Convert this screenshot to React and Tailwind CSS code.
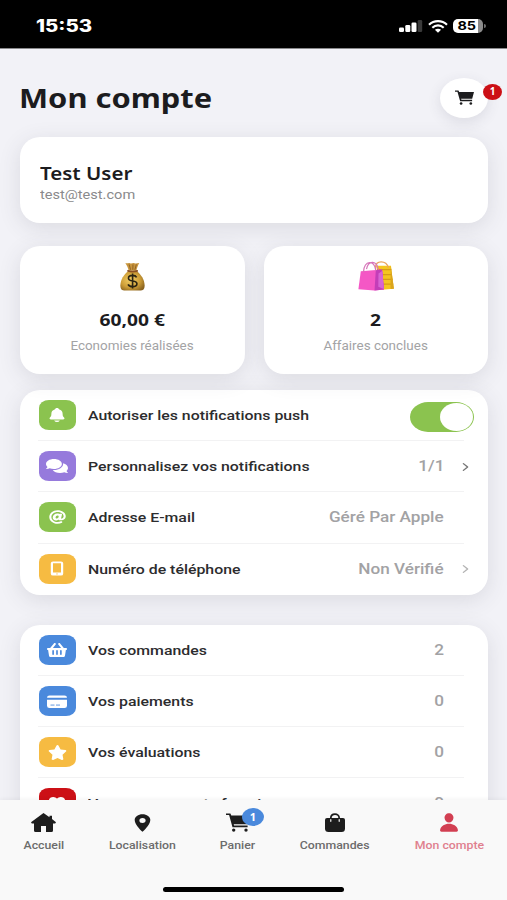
import React, { useState } from 'react'
import { IoNotifications, IoHeart, IoChevronForward, IoLocationSharp, IoPerson } from 'react-icons/io5'
import { FaComments, FaAt, FaShoppingBasket, FaStar } from 'react-icons/fa'

const CartIcon = ({ className }) => (
  <svg className={className} viewBox="0 0 24 20" preserveAspectRatio="none" fill="currentColor">
    <path d="M0 .6h4.400l.9 1.900H24l-2.300 9.300H7.700l.4 1.300H21.600v2H6.500L3.100 2.200H0Z" />
    <circle cx="7.700" cy="18" r="1.700" />
    <circle cx="20" cy="18" r="1.700" />
  </svg>
)

const HomeIcon = ({ className }) => (
  <svg className={className} viewBox="0 0 25 19" preserveAspectRatio="none" fill="currentColor">
    <path d="M12.500 0 18.500 4.200V2.800h2.500v3.200l4 3.300-.8 1.300H22V17.500q0 1.500-1.500 1.500H15v-6h-5v6H4.500Q3 19 3 17.500v-6.900H.8L0 9.300Z" />
  </svg>
)

const BagIcon = ({ className }) => (
  <svg className={className} viewBox="0 0 20 19" preserveAspectRatio="none">
    <path d="M2 5h16q2 0 2 2v8.500q0 3.500-3.500 3.500h-13Q0 19 0 15.500V7q0-2 2-2Z" fill="currentColor" />
    <path d="M5.800 6V5.200c0-5.400 8.400-5.400 8.400 0V6" stroke="currentColor" strokeWidth="1.700" fill="none" />
    <path d="M5.800 6.600v1.700M14.200 6.600v1.700" stroke="#f9f9f9" strokeWidth="1.200" strokeLinecap="round" />
  </svg>
)

const CardIcon = ({ className }) => (
  <svg className={className} viewBox="0 0 20 16" preserveAspectRatio="none">
    <path d="M2.500 1.500h15Q20 1.500 20 4H0q0-2.500 2.500-2.500ZM0 6h20v6.500q0 2.500-2.500 2.500h-15Q0 15 0 12.500Z" fill="currentColor" />
    <path d="M3.500 11.800h4M9 11.800h4" stroke="#4a89dc" strokeWidth=".9" />
  </svg>
)

const TabletIcon = ({ className }) => (
  <svg className={className} viewBox="0 0 20 16" preserveAspectRatio="none">
    <path fillRule="evenodd" d="M6 .5h8q2.200 0 2.200 2v11q0 2-2.200 2H6q-2.200 0-2.200-2v-11q0-2 2.200-2ZM6 2.500v9.700h8V2.500Z" fill="currentColor" />
    <circle cx="10" cy="13.800" r=".7" fill="#f6bb42" />
  </svg>
)

const settings = [
  { label: 'Autoriser les notifications push', icon: IoNotifications, color: 'bg-[#8bc34f]', toggle: true },
  { label: 'Personnalisez vos notifications', icon: FaComments, color: 'bg-[#967adc]', size: 'h-4 w-[22px]', value: '1/1', chevron: 'text-[#777]' },
  { label: 'Adresse E-mail', icon: FaAt, color: 'bg-[#8bc34f]', size: 'h-[14px] w-[17px]', value: 'Géré Par Apple' },
  { label: 'Numéro de téléphone', icon: TabletIcon, color: 'bg-[#f6bb42]', size: 'h-[15px] w-5', value: 'Non Vérifié', chevron: 'text-[#b4b4b4]' }
]

const activity = [
  { label: 'Vos commandes', icon: FaShoppingBasket, color: 'bg-[#4a89dc]', size: 'h-4 w-5', value: '2' },
  { label: 'Vos paiements', icon: CardIcon, color: 'bg-[#4a89dc]', size: 'h-[15px] w-5', value: '0' },
  { label: 'Vos évaluations', icon: FaStar, color: 'bg-[#f6bb42]', size: 'h-[15px] w-[19px]', value: '0' },
  { label: 'Vos commerçants favoris', icon: IoHeart, color: 'bg-[#cc1016]', value: '0' }
]

const tabs = [
  { label: 'Accueil', icon: HomeIcon, size: 'h-[19px] w-[25px]', width: 'w-[87px]' },
  { label: 'Localisation', icon: IoLocationSharp, size: 'h-5 w-[25px]', width: 'w-[110px]' },
  { label: 'Panier', icon: CartIcon, size: 'h-[19px] w-6', width: 'w-[82px]', badge: 1 },
  { label: 'Commandes', icon: BagIcon, size: 'h-[19px] w-5', width: 'w-[112px]' },
  { label: 'Mon compte', icon: IoPerson, size: 'h-[21px] w-[22px]', width: 'w-[116px]', active: true }
]

const StatusBar = () => (
  <div className="flex h-12 shrink-0 items-center justify-between bg-black pl-9 pr-[21px] pt-1 text-white">
    <span className="origin-left scale-x-[1.2] font-['Inter'] text-[17px] font-extrabold leading-none">15:53</span>
    <div className="flex items-center">
      <svg className="h-3 w-6" viewBox="0 0 24 12">
        <rect x="0" y="7.500" width="5" height="4.500" rx="1.300" fill="#fff" />
        <rect x="6.300" y="5" width="5" height="7" rx="1.300" fill="#fff" />
        <rect x="12.500" y="2.500" width="5" height="9.500" rx="1.300" fill="#fff" />
        <rect x="18.700" y="0" width="4.500" height="12" rx="1.300" fill="#3a3a3a" />
      </svg>
      <svg className="ml-[5px] h-[13px] w-5" viewBox="0 0 20 13" fill="none" stroke="#fff" strokeWidth="2.200">
        <path d="M1 4.700C6-.1 14-.1 19 4.700" />
        <path d="M4.300 7.700c3.200-3 8.200-3 11.400 0" />
        <path d="M6.900 9.800c1.700-1.500 4.500-1.500 6.200 0L10 12.800Z" fill="#fff" stroke="none" />
      </svg>
      <div className="ml-[5px] flex h-[14px] w-[30px] items-center justify-center rounded-[5px] bg-[linear-gradient(90deg,#fff_85%,#8c8c8c_85%)] pr-0.5 text-black">
        <span className="scale-x-[1.2] font-['Inter'] text-[12px] font-bold leading-[14px]">85</span>
      </div>
      <div className="ml-px h-1 w-0.5 rounded-r-full bg-[#6e6e6e]" />
    </div>
  </div>
)

const MoneyBag = () => (
  <svg className="h-[29px] w-[25px]" viewBox="0 0 26 30" preserveAspectRatio="none">
    <defs>
      <radialGradient id="sack" cx=".42" cy=".45" r=".65">
        <stop offset="0" stopColor="#f2cf67" />
        <stop offset=".6" stopColor="#cf9f38" />
        <stop offset="1" stopColor="#8b6420" />
      </radialGradient>
    </defs>
    <path d="M8.500 9.500C4 13 .6 18 .4 24c-.1 4 1.600 5.600 5 5.600h15.200c3.400 0 5.100-1.600 5-5.600C25.400 18 22 13 17.500 9.500Z" fill="url(#sack)" />
    <path d="M5.500 1c2 .8 3.500-.6 5 .2 1.500.8 3-.8 4.500 0 1.700.9 3.500-.3 5-.2-1.300 2.500-2.500 5-3 8H9C8.500 6 7 3.300 5.500 1Z" fill="#c8953d" />
    <path d="M9.500 2.500 11 8M13.500 2.500 13.300 8M17 2.500 15.500 8" stroke="#8d6124" strokeWidth="1" fill="none" />
    <path d="M8.300 9.200c3 1 6.500 1 9.600 0" stroke="#8a4f22" strokeWidth="1.800" strokeLinecap="round" fill="none" />
    <path d="M17.300 15.900c-.7-1.400-2.200-2.100-4.200-2.100-2.400 0-4.300 1.100-4.300 2.900 0 4.200 8.800 1.700 8.800 5.800 0 1.900-1.900 3-4.500 3-2.300 0-4-.8-4.700-2.400M13.100 11.900v15.500" stroke="#2b2412" strokeWidth="1.700" fill="none" />
  </svg>
)

const ShoppingBags = () => (
  <svg className="h-[30px] w-9" viewBox="0 0 36 31" preserveAspectRatio="none">
    <path d="M18 4.800h15l2.700 23.800-12 1.200Z" fill="#f4c51f" />
    <path d="M19 9h14.300M20 14h14M22 19h12.600M23 24h12.200" stroke="#d79c17" strokeWidth="1.300" />
    <path d="M32.700 5 36 28.600l-3.500.4Z" fill="#dba51d" />
    <path d="M17.500 7c.3-8 10.500-8 13 0" stroke="#eaa35b" strokeWidth="1.300" fill="none" />
    <path d="M2.800 10.500 24 8.800l2 20.700-9.500 1L.4 29.300Z" fill="#f457c5" />
    <path d="M17.800 9.300 24 8.800l2 20.700-9.500 1Z" fill="#c33eb8" />
    <path d="m20.500 13 4-3 1.300 19-5.500-2.300Z" fill="#d765d4" />
    <path d="M5.500 11.500c.3-13 11.500-13 12.300-1.500M8.500 8.500C10.500-1.500 19-.5 20.300 9" stroke="#d675b9" strokeWidth="1.200" fill="none" />
  </svg>
)

const StatCard = ({ icon, value, label }) => (
  <div className="flex h-32 flex-1 flex-col items-center rounded-[20px] bg-white pt-[15px] shadow-[0_5px_22px_rgba(60,60,80,0.13)]">
    <div className="flex h-[30px] items-center">{icon}</div>
    <p className="mt-[17px] flex h-6 items-center scale-x-[1.2] font-['Noto_Sans'] text-[16px] font-bold text-[#1c1c1e]">{value}</p>
    <p className="mt-1.5 flex h-4 items-center scale-x-[1.12] whitespace-nowrap font-['Roboto'] text-[12px] text-[#a3a3a5]">{label}</p>
  </div>
)

const Toggle = ({ checked, onChange }) => (
  <button
    type="button"
    role="switch"
    aria-checked={checked}
    onClick={() => onChange(!checked)}
    className={`mr-[14px] mt-[3px] flex h-[30px] w-16 items-center p-px [border-radius:18px/15px] ${checked ? 'justify-end bg-[#8bc34f]' : 'justify-start bg-gray-300'}`}
  >
    <span className="h-7 w-[33px] rounded-[50%] bg-white" />
  </button>
)

const Row = ({ item, last, checked, onChange }) => {
  const Icon = item.icon
  return (
    <div className="relative flex h-[51.2px] items-center pl-[18.5px]">
      <div className={`mb-px flex h-[30px] w-[37px] items-center justify-center [border-radius:10px/8px] ${item.color}`}>
        <Icon preserveAspectRatio="none" className={`text-white ${item.size || 'h-4 w-5'}`} />
      </div>
      <span className="mb-px ml-3 origin-left scale-x-[1.175] whitespace-nowrap font-['Roboto'] text-[13.5px] font-medium text-[#2c2c2e]">{item.label}</span>
      <div className="ml-auto flex items-center">
        {item.toggle ? (
          <Toggle checked={checked} onChange={onChange} />
        ) : (
          <>
            <span className="origin-right scale-x-[1.225] whitespace-nowrap font-['Roboto'] text-[14px] font-medium text-[#a2a2a4]">{item.value}</span>
            <div className="ml-[14px] mr-[15px] flex w-[15px] justify-center">
              {item.chevron && <IoChevronForward className={`h-3 w-[15px] ${item.chevron}`} preserveAspectRatio="none" />}
            </div>
          </>
        )}
      </div>
      {!last && <div className="absolute bottom-0 left-[18px] right-6 h-px bg-[#f2f2f3]" />}
    </div>
  )
}

const TabBar = () => (
  <nav className="z-10 flex h-[100px] shrink-0 flex-col bg-[#f9f9f9] shadow-[0_-1px_4px_rgba(0,0,0,0.05)]">
    <div className="flex">
      {tabs.map((tab) => {
        const Icon = tab.icon
        return (
          <a key={tab.label} className={`relative flex shrink-0 flex-col items-center pt-3 ${tab.width} ${tab.active ? 'text-[#d23f52]' : 'text-[#1d1d1d]'}`}>
            <div className="flex h-[21px] items-center">
              <Icon preserveAspectRatio="none" className={tab.size} />
            </div>
            <span className={`mt-[5px] scale-x-[1.14] whitespace-nowrap font-['Roboto'] text-[10.8px] font-medium leading-4 ${tab.active ? 'text-[#e0808e]' : 'text-[#6c6c6c]'}`}>{tab.label}</span>
            {tab.badge && (
              <span className="absolute left-[45px] top-2 flex h-[18px] w-[22px] items-center justify-center rounded-[50%] bg-[#4a89dc] font-['Noto_Sans'] text-[11px] font-bold text-white">{tab.badge}</span>
            )}
          </a>
        )
      })}
    </div>
    <div className="mx-auto mt-auto mb-2 h-[5px] w-[181px] rounded-full bg-black" />
  </nav>
)

const App = () => {
  const [push, setPush] = useState(true)

  return (
    <div className="flex h-[900px] w-[507px] flex-col overflow-hidden bg-[#f2f2f7]">
      <StatusBar />

      <main className="min-h-0 flex-1 overflow-hidden border-t border-[#8a8a8c] pl-5 pr-[19px]">
        <div className="flex h-[88px] items-center justify-between pt-3">
          <h1 className="-ml-px origin-left scale-x-[1.165] font-['Noto_Sans'] text-[26.5px] font-bold text-[#1c1c1e]">Mon compte</h1>
          <div className="relative mt-[-3px] flex h-10 w-12 items-center justify-center rounded-[50%] bg-white shadow-[0_4px_14px_rgba(60,60,80,0.12)]">
            <CartIcon className="h-[15px] w-[19px] text-[#1c1c1e]" />
            <span className="absolute left-[43px] top-[6px] flex h-4 w-[19px] items-center justify-center rounded-[50%] bg-[#cc1016] font-['Noto_Sans'] text-[10px] font-bold text-white">1</span>
          </div>
        </div>

        <div className="h-[86px] rounded-[20px] bg-white pl-5 pt-6 shadow-[0_5px_22px_rgba(60,60,80,0.13)]">
          <p className="w-fit origin-left scale-x-[1.14] font-['Noto_Sans'] text-[18px] font-semibold leading-[25px] text-[#1c1c1e]">Test User</p>
          <p className="w-fit origin-left scale-x-[1.165] font-['Roboto'] text-[12.5px] leading-[18px] text-[#8a8a8c]">test@test.com</p>
        </div>

        <div className="mt-[23px] flex gap-[19px]">
          <StatCard icon={<MoneyBag />} value="60,00 €" label="Economies réalisées" />
          <StatCard icon={<ShoppingBags />} value="2" label="Affaires conclues" />
        </div>

        <div className="mt-4 rounded-[20px] bg-white shadow-[0_5px_22px_rgba(60,60,80,0.13)]">
          {settings.map((item, i) => (
            <Row key={item.label} item={item} last={i === settings.length - 1} checked={push} onChange={setPush} />
          ))}
        </div>

        <div className="mt-[30px] rounded-[20px] bg-white shadow-[0_5px_22px_rgba(60,60,80,0.13)]">
          {activity.map((item, i) => (
            <Row key={item.label} item={item} last={i === activity.length - 1} />
          ))}
        </div>
      </main>

      <TabBar />
    </div>
  )
}

export default App
